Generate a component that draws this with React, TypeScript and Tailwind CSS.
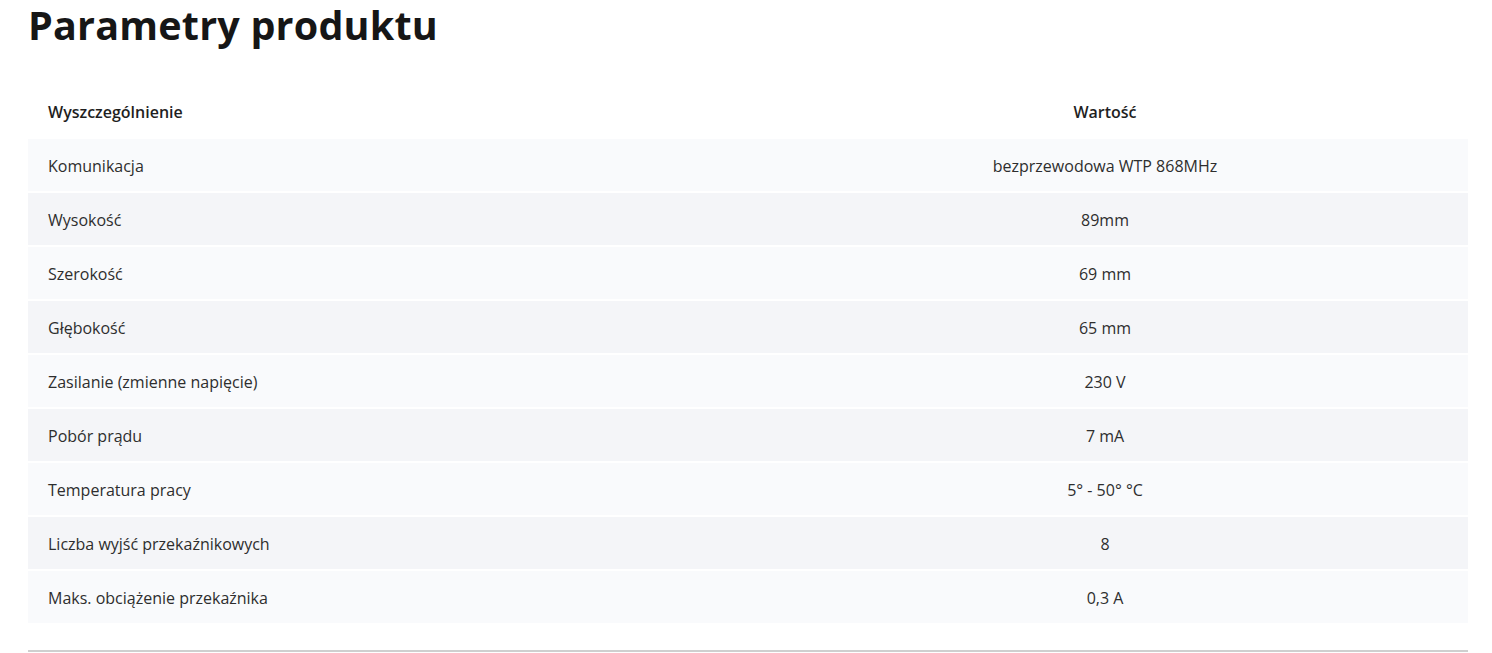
import React from 'react';

const rows: [string, string][] = [
  ['Komunikacja', 'bezprzewodowa WTP 868MHz'],
  ['Wysokość', '89mm'],
  ['Szerokość', '69 mm'],
  ['Głębokość', '65 mm'],
  ['Zasilanie (zmienne napięcie)', '230 V'],
  ['Pobór prądu', '7 mA'],
  ['Temperatura pracy', '5° - 50° °C'],
  ['Liczba wyjść przekaźnikowych', '8'],
  ['Maks. obciążenie przekaźnika', '0,3 A'],
];

export default function App() {
  return (
    <div className="w-[1492px] h-[653px] bg-white pl-[28px] pr-[24px] text-[#2e2e2e]" style={{ fontFamily: '"Open Sans", "Liberation Sans", sans-serif' }}>
      <h1 className="pt-[1px] text-[39.5px] leading-[48px] font-bold text-[#161616] tracking-[0.2px]">Parametry produktu</h1>

      <div className="mt-[36px] w-[1440px]">
        {/* Header */}
        <div className="grid grid-cols-2 h-[54px] items-center text-[16px] font-semibold text-[#1f1f1f]">
          <div className="pl-[20px]">Wyszczególnienie</div>
          <div className="text-center pr-[6px]">Wartość</div>
        </div>

        {/* Rows */}
        {rows.map(([name, value], i) => (
          <div
            key={name}
            className={`grid grid-cols-2 h-[54px] items-center border-b-2 border-white text-[16px] ${i % 2 === 0 ? 'bg-[#f9fafc]' : 'bg-[#f4f5f8]'}`}
          >
            <div className="pl-[20px] pt-[2px]">{name}</div>
            <div className="text-center pr-[6px] pt-[2px]">{value}</div>
          </div>
        ))}

        <div className="mt-[25px] h-[2px] bg-[#cfcfcf]" />
      </div>
    </div>
  );
}
